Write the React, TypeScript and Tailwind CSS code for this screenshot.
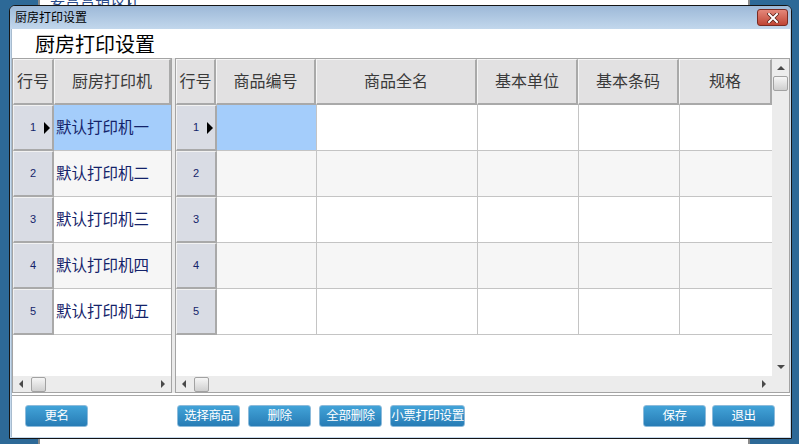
import React from 'react';

const font = { fontFamily: '"Liberation Sans", "Noto Sans CJK SC", sans-serif' };

const rightCols = [
  { title: '商品编号', w: 'w-[100px]' },
  { title: '商品全名', w: 'w-[161px]' },
  { title: '基本单位', w: 'w-[101px]' },
  { title: '基本条码', w: 'w-[101px]' },
  { title: '规格', w: 'w-[93px]' },
];

const printers = ['默认打印机一', '默认打印机二', '默认打印机三', '默认打印机四', '默认打印机五'];

const headCell =
  'h-[46px] shrink-0 flex items-center justify-center bg-[#e2e1e2] border-l border-t border-l-[#f6f6f6] border-t-[#f6f6f6] border-r-2 border-b-2 border-r-[#a9a9a9] border-b-[#a9a9a9] text-[16px] text-[#3a3a3a]';

const rowHead =
  'relative w-[41px] h-[46px] shrink-0 flex items-center justify-center bg-[#d9dce4] border-l border-t border-l-[#f2f2f2] border-t-[#f2f2f2] border-r-2 border-b-2 border-r-[#a9a9a9] border-b-[#a9a9a9] text-[11px] text-[#14246a]';

const Tri = ({ dir }: { dir: 'up' | 'down' | 'left' | 'right' }) => {
  const pts = {
    up: '0,4 4,0 8,4',
    down: '0,0 8,0 4,4',
    left: '4,0 4,8 0,4',
    right: '0,0 0,8 4,4',
  }[dir];
  const vert = dir === 'up' || dir === 'down';
  return (
    <svg width={vert ? 8 : 4} height={vert ? 4 : 8} viewBox={vert ? '0 0 8 4' : '0 0 4 8'}>
      <polygon points={pts} fill="#4a4a4a" />
    </svg>
  );
};

const Thumb = () => (
  <div className="w-[15px] h-[15px] shrink-0 rounded-[2px] border border-[#a2a2a2] bg-gradient-to-b from-[#f6f6f6] to-[#cfcfcf]" />
);

const HScroll = ({ width }: { width: string }) => (
  <div className={`h-[16px] ${width} shrink-0 bg-[#ececec] flex items-center pl-[6px] pr-[6px]`}>
    <Tri dir="left" />
    <div className="ml-[8px]">
      <Thumb />
    </div>
    <div className="flex-1" />
    <Tri dir="right" />
  </div>
);

const Btn = ({ label, w = 'w-[63px]' }: { label: string; w?: string }) => (
  <button
    className={`${w} h-[22px] shrink-0 whitespace-nowrap rounded-[3px] border border-[#8dbbdb] bg-gradient-to-b from-[#42a3d8] to-[#277cb5] text-white text-[12.5px] tracking-[-0.4px] leading-none flex items-center justify-center`}
  >
    {label}
  </button>
);

const Marker = () => (
  <svg className="absolute right-[2px] top-[16px]" width="6" height="12" viewBox="0 0 6 12">
    <polygon points="0,0 6,6 0,12" fill="#000" />
  </svg>
);

export default function App() {
  return (
    <div className="relative w-[799px] h-[444px] overflow-hidden bg-[#2d6997]" style={font}>
      {/* window behind */}
      <div className="absolute left-[38px] top-[-20px] w-[712px] h-[490px] bg-white border-x-2 border-[#8a8a8a]">
        <div className="absolute left-[88px] top-0 w-[2px] h-[26px] bg-[#555]" />
        <div className="absolute left-[10px] top-[12px] text-[15px] text-[#2a4a8a] leading-none">要营营销设计</div>
      </div>

      {/* dialog */}
      <div className="absolute left-[9px] top-[5px] w-[783px] h-[434px] border border-[#151515] rounded-t-[6px] bg-[#c6daee] flex flex-col overflow-hidden">
        <div className="h-[23px] shrink-0 flex items-center justify-between pl-[5px] pr-[3px] bg-gradient-to-b from-[#9db9d8] to-[#c2d7ec]">
          <span className="text-[12px] text-black">厨房打印设置</span>
          <div className="w-[31px] h-[17px] rounded-[3px] border border-[#7a2b22] bg-gradient-to-b from-[#e4877a] to-[#bf4535] flex items-center justify-center">
            <svg width="12" height="10" viewBox="0 0 12 10">
              <path d="M2 1 L10 9 M10 1 L2 9" stroke="#5a2018" strokeWidth="3.6" strokeLinecap="square" />
              <path d="M2 1 L10 9 M10 1 L2 9" stroke="#ffffff" strokeWidth="2" strokeLinecap="square" />
            </svg>
          </div>
        </div>

        <div className="flex-1 px-[1px] pb-[1px] flex flex-col">
          <div className="flex-1 bg-white flex flex-col border-l border-[#a8bccf]">
            <div className="h-[29px] shrink-0 pl-[23px] flex items-end">
              <span className="text-[20px] leading-[26px] text-black">厨房打印设置</span>
            </div>

            <div className="h-[335px] shrink-0 flex">
              {/* left grid */}
              <div className="w-[160px] shrink-0 border border-[#a4a4a4] flex flex-col">
                <div className="flex">
                  <div className={`${headCell} w-[41px]`}>行号</div>
                  <div className={`${headCell} w-[117px]`}>厨房打印机</div>
                </div>
                {printers.map((p, i) => (
                  <div key={p} className={`flex ${i % 2 === 1 ? 'bg-[#f6f6f6]' : 'bg-white'}`}>
                    <div className={rowHead}>
                      {i + 1}
                      {i === 0 && <Marker />}
                    </div>
                    <div
                      className={`w-[117px] h-[46px] border-b border-[#c4c4c4] flex items-center pl-[2px] text-[15.5px] text-[#13226a] ${
                        i === 0 ? 'bg-[#a4cdfb]' : ''
                      }`}
                    >
                      {p}
                    </div>
                  </div>
                ))}
                <div className="flex-1" />
                <HScroll width="w-full" />
              </div>

              <div className="w-[3px] shrink-0 bg-[#eaeaea]" />

              {/* right grid */}
              <div className="w-[615px] shrink-0 border border-[#a4a4a4] flex flex-col">
                <div className="flex flex-1">
                  <div className="w-[596px] shrink-0 flex flex-col">
                    <div className="flex">
                      <div className={`${headCell} w-[40px]`}>行号</div>
                      {rightCols.map((c) => (
                        <div key={c.title} className={`${headCell} ${c.w}`}>
                          {c.title}
                        </div>
                      ))}
                    </div>
                    {[0, 1, 2, 3, 4].map((i) => (
                      <div key={i} className={`flex ${i % 2 === 1 ? 'bg-[#f6f6f6]' : 'bg-white'}`}>
                        <div className={`${rowHead} w-[40px]`}>
                          {i + 1}
                          {i === 0 && <Marker />}
                        </div>
                        {rightCols.map((c, j) => (
                          <div
                            key={c.title}
                            className={`${c.w} h-[46px] shrink-0 border-r border-b border-[#c4c4c4] ${
                              i === 0 && j === 0 ? 'bg-[#a4cdfb]' : ''
                            }`}
                          />
                        ))}
                      </div>
                    ))}
                  </div>
                  <div className="w-[17px] shrink-0 bg-[#ececec] flex flex-col items-center pt-[7px] pb-[7px]">
                    <Tri dir="up" />
                    <div className="mt-[6px]">
                      <Thumb />
                    </div>
                    <div className="flex-1" />
                    <Tri dir="down" />
                  </div>
                </div>
                <div className="flex">
                  <HScroll width="w-[596px]" />
                  <div className="w-[17px] h-[16px] bg-[#ececec]" />
                </div>
              </div>
            </div>

            <div className="h-[2px] shrink-0" />
            <div className="h-[1px] shrink-0 bg-[#a8a8a8]" />

            <div className="flex-1 flex items-start pt-[9px] pl-[13px]">
              <Btn label="更名" />
              <div className="ml-[89px] flex gap-[8px]">
                <Btn label="选择商品" />
                <Btn label="删除" />
                <Btn label="全部删除" />
                <Btn label="小票打印设置" w="w-[75px]" />
              </div>
              <div className="ml-[178px] flex gap-[6px]">
                <Btn label="保存" />
                <Btn label="退出" />
              </div>
            </div>
          </div>
        </div>
      </div>
    </div>
  );
}
